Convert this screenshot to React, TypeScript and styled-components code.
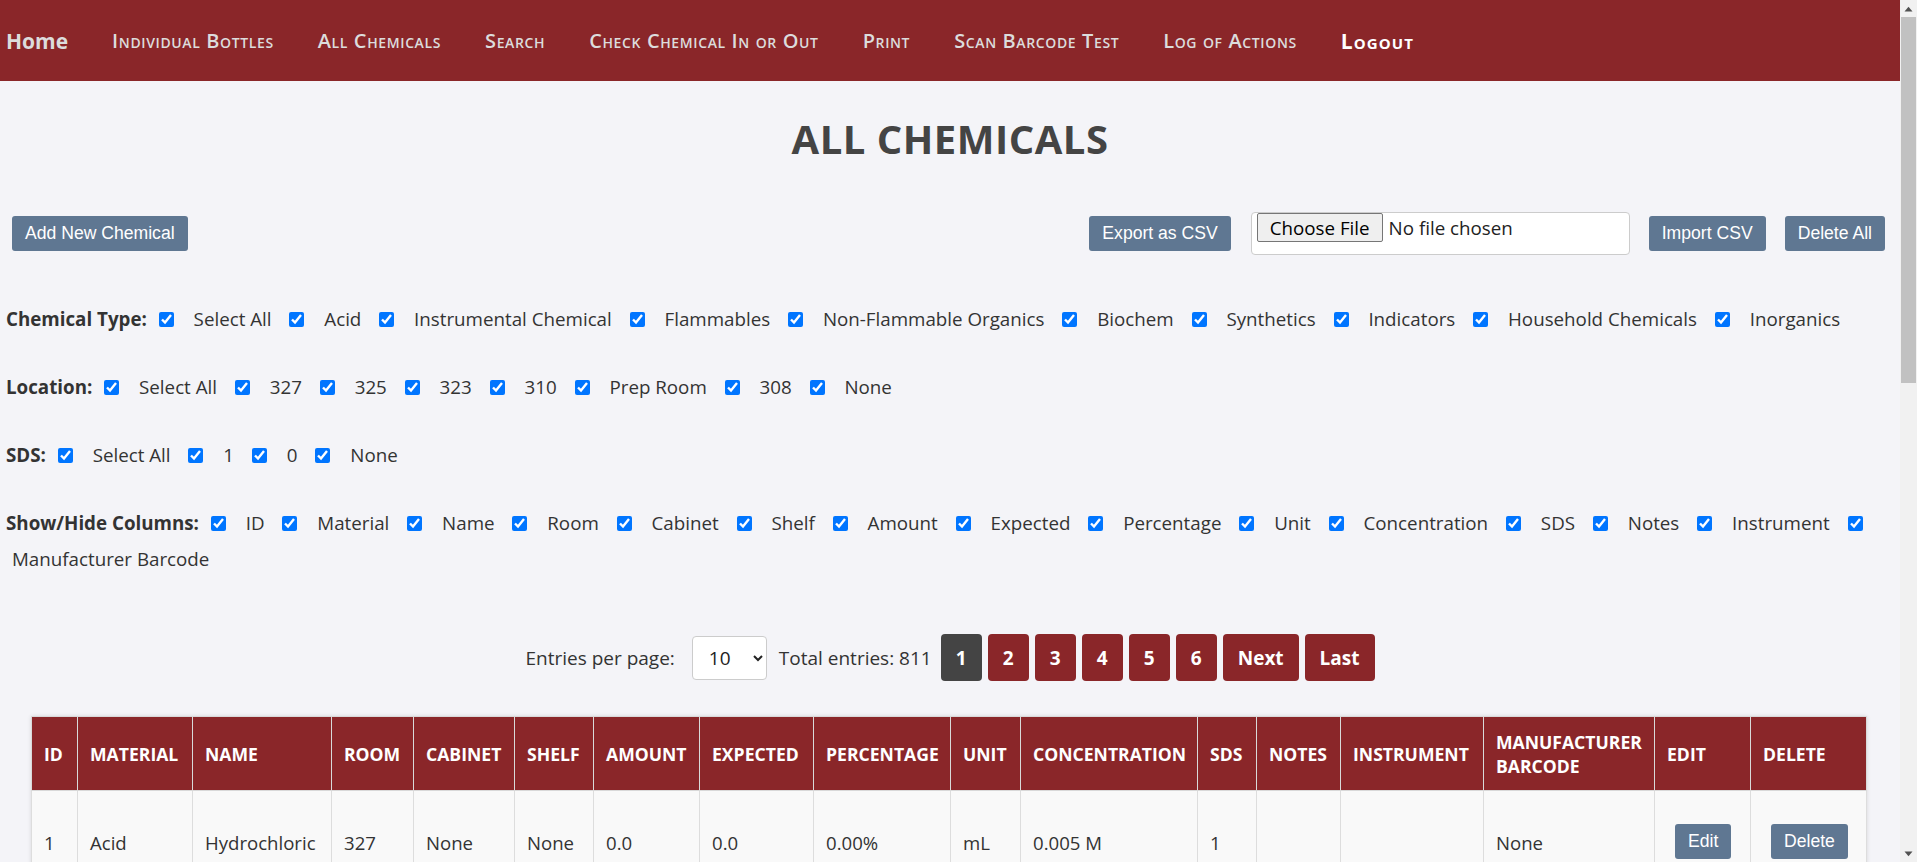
import React from "react";
import styled, { createGlobalStyle } from "styled-components";

const GlobalStyle = createGlobalStyle`
  html, body { margin: 0; padding: 0; }
  body {
    background: #f4f4f8;
    font-family: "Open Sans", "Noto Sans", sans-serif;
    color: #333;
    overflow: hidden;
  }
`;

const RED = "#8a2629";
const SLATE = "#5f7792";

const Shell = styled.div`
  display: flex;
  height: 100vh;
  overflow: hidden;
`;

const Page = styled.main`
  flex: 1;
  min-width: 0;
  overflow: hidden;
`;

const ScrollTrack = styled.div`
  width: 17px;
  flex: none;
  background: #f1f1f1;
  display: flex;
  flex-direction: column;
`;

const ScrollArrow = styled.div`
  height: 17px;
  display: flex;
  align-items: center;
  justify-content: center;
`;

const ScrollThumb = styled.div`
  height: 366px;
  margin: 0 1px;
  background: #c1c1c1;
`;

const ScrollRest = styled.div`
  flex: 1;
`;

const NavBar = styled.nav`
  height: 81px;
  background: ${RED};
  display: flex;
  align-items: center;
  gap: 44px;
  padding-left: 6px;
`;

const NavLink = styled.a<{ $home?: boolean; $strong?: boolean }>`
  color: ${(p) => (p.$strong ? "#ffffff" : "#dcdcdc")};
  text-decoration: none;
  font-family: "Open Sans", sans-serif;
  font-variant: ${(p) => (p.$home ? "normal" : "small-caps")};
  font-size: ${(p) => (p.$home ? "21px" : p.$strong ? "21px" : "20px")};
  letter-spacing: ${(p) => (p.$home ? "0" : p.$strong ? "1.1px" : "0.62px")};
  font-weight: ${(p) => (p.$home || p.$strong ? 700 : 600)};
  white-space: nowrap;
`;

const Title = styled.h1`
  margin: 31px 0 0;
  height: 54px;
  line-height: 54px;
  text-align: center;
  font-size: 40px;
  font-weight: 700;
  color: #444;
  letter-spacing: 0.5px;
`;

const ActionBar = styled.div`
  margin-top: 46px;
  height: 43px;
  display: flex;
  align-items: center;
  padding: 0 15px 0 12px;
`;

const Spacer = styled.div`
  flex: 1;
`;

const SlateButton = styled.button<{ $gapLeft?: number }>`
  height: 35px;
  padding: 0 13px;
  margin-left: ${(p) => p.$gapLeft ?? 0}px;
  background: ${SLATE};
  color: #fff;
  border: none;
  border-radius: 3px;
  font-family: "Liberation Sans", Arial, sans-serif;
  font-size: 17.6px;
  white-space: nowrap;
  cursor: pointer;
`;

const FileInput = styled.input`
  box-sizing: border-box;
  width: 379px;
  height: 43px;
  margin-left: 20px;
  padding: 0 5px;
  background: #fff;
  border: 1px solid #ccc;
  border-radius: 4px;
  font-family: "Open Sans", sans-serif;
  font-size: 18.75px;
  color: #222;

  &::file-selector-button {
    height: 29px;
    margin-right: 6px;
    padding: 0 12px;
    background: #efefef;
    border: 1px solid #767676;
    border-radius: 2px;
    font-family: "Open Sans", sans-serif;
    font-size: 18.75px;
    color: #000;
  }
`;

const Filters = styled.div`
  margin-top: 46px;
  padding: 0 6px;
  display: flex;
  flex-direction: column;
  gap: 32px;
`;

const FilterLine = styled.div`
  line-height: 36px;
  font-size: 18.75px;
  color: #333;
`;

const FilterTitle = styled.strong`
  font-weight: 700;
  color: #333;
`;

const Check = styled.input`
  width: 15px;
  height: 15px;
  margin: 0 9px 0 7px;
  vertical-align: -1px;
  accent-color: #0075ff;
`;

const OptLabel = styled.label`
  margin: 0 6px;
`;

const Pager = styled.div`
  margin-top: 57px;
  display: flex;
  align-items: center;
  justify-content: center;
  font-size: 19px;
  color: #333;
`;

const PagerText = styled.span<{ $mr: number }>`
  margin-right: ${(p) => p.$mr}px;
  white-space: nowrap;
`;

const PerPage = styled.select`
  width: 75px;
  height: 44px;
  margin-right: 12px;
  padding: 0 8px 0 12px;
  background: #fff;
  border: 1px solid #ccc;
  border-radius: 4px;
  font-family: "Open Sans", sans-serif;
  font-size: 19px;
  color: #222;
`;

const PageButtons = styled.div`
  display: flex;
  gap: 6px;
`;

const PageButton = styled.button<{ $active?: boolean }>`
  min-width: 41px;
  height: 47px;
  padding: 0 15px;
  background: ${(p) => (p.$active ? "#444444" : RED)};
  color: #fff;
  border: none;
  border-radius: 4px;
  font-family: "Open Sans", sans-serif;
  font-size: 19px;
  font-weight: 700;
  cursor: pointer;
`;

const TableWrap = styled.div`
  margin: 35px 0 0 31px;
`;

const Table = styled.table`
  width: 1835px;
  table-layout: fixed;
  border-collapse: collapse;
  box-shadow: 0 0 4px rgba(0, 0, 0, 0.12);
  font-size: 18.6px;
`;

const Th = styled.th<{ $w: number }>`
  width: ${(p) => p.$w}px;
  box-sizing: border-box;
  height: 74px;
  padding: 12px;
  background: ${RED};
  color: #fff;
  font-size: 17.6px;
  font-weight: 700;
  text-transform: uppercase;
  text-align: left;
  line-height: 24px;
  border: 1px solid #d9d9d9;
`;

const Td = styled.td`
  height: 104px;
  box-sizing: border-box;
  padding: 12px;
  background: #f9f9f9;
  color: #333;
  border: 1px solid #dddddd;
  vertical-align: middle;
  white-space: nowrap;
  overflow: hidden;
`;

const RowButton = styled(SlateButton)`
  margin-left: 8px;
  margin-top: -4px;
`;

const navItems = [
  "Individual Bottles",
  "All Chemicals",
  "Search",
  "Check Chemical In or Out",
  "Print",
  "Scan Barcode Test",
  "Log of Actions",
];

const filterGroups: { title: string; options: string[] }[] = [
  {
    title: "Chemical Type:",
    options: [
      "Select All",
      "Acid",
      "Instrumental Chemical",
      "Flammables",
      "Non-Flammable Organics",
      "Biochem",
      "Synthetics",
      "Indicators",
      "Household Chemicals",
      "Inorganics",
    ],
  },
  {
    title: "Location:",
    options: ["Select All", "327", "325", "323", "310", "Prep Room", "308", "None"],
  },
  { title: "SDS:", options: ["Select All", "1", "0", "None"] },
  {
    title: "Show/Hide Columns:",
    options: [
      "ID",
      "Material",
      "Name",
      "Room",
      "Cabinet",
      "Shelf",
      "Amount",
      "Expected",
      "Percentage",
      "Unit",
      "Concentration",
      "SDS",
      "Notes",
      "Instrument",
      "Manufacturer Barcode",
    ],
  },
];

const columns: { label: string; w: number }[] = [
  { label: "ID", w: 46 },
  { label: "Material", w: 115 },
  { label: "Name", w: 139 },
  { label: "Room", w: 82 },
  { label: "Cabinet", w: 101 },
  { label: "Shelf", w: 79 },
  { label: "Amount", w: 106 },
  { label: "Expected", w: 114 },
  { label: "Percentage", w: 137 },
  { label: "Unit", w: 70 },
  { label: "Concentration", w: 177 },
  { label: "SDS", w: 59 },
  { label: "Notes", w: 84 },
  { label: "Instrument", w: 143 },
  { label: "Manufacturer Barcode", w: 171 },
  { label: "Edit", w: 96 },
  { label: "Delete", w: 116 },
];

const rows: string[][] = [
  ["1", "Acid", "Hydrochloric", "327", "None", "None", "0.0", "0.0", "0.00%", "mL", "0.005 M", "1", "", "", "None"],
];

function Arrow({ up }: { up?: boolean }) {
  return (
    <svg width="9" height="6" viewBox="0 0 9 6" aria-hidden="true">
      <path d={up ? "M0.5 5.5 L4.5 0.8 L8.5 5.5 Z" : "M0.5 0.5 L4.5 5.2 L8.5 0.5 Z"} fill="#505050" />
    </svg>
  );
}

export default function App() {
  return (
    <>
      <GlobalStyle />
      <Shell>
        <Page>
          <NavBar>
            <NavLink $home href="#">Home</NavLink>
            {navItems.map((n) => (
              <NavLink key={n} href="#">{n}</NavLink>
            ))}
            <NavLink $strong href="#">Logout</NavLink>
          </NavBar>

          <Title>ALL CHEMICALS</Title>

          <ActionBar>
            <SlateButton>Add New Chemical</SlateButton>
            <Spacer />
            <SlateButton>Export as CSV</SlateButton>
            <FileInput type="file" />
            <SlateButton $gapLeft={19}>Import CSV</SlateButton>
            <SlateButton $gapLeft={19}>Delete All</SlateButton>
          </ActionBar>

          <Filters>
            {filterGroups.map((g) => (
              <FilterLine key={g.title}>
                <FilterTitle>{g.title}</FilterTitle>{" "}
                {g.options.map((o) => (
                  <React.Fragment key={o}>
                    <Check type="checkbox" defaultChecked />{" "}
                    <OptLabel>{o}</OptLabel>{" "}
                  </React.Fragment>
                ))}
              </FilterLine>
            ))}
          </Filters>

          <Pager>
            <PagerText $mr={17}>Entries per page:</PagerText>
            <PerPage defaultValue="10">
              <option value="10">10</option>
              <option value="25">25</option>
              <option value="50">50</option>
              <option value="100">100</option>
            </PerPage>
            <PagerText $mr={9}>Total entries: 811</PagerText>
            <PageButtons>
              {["1", "2", "3", "4", "5", "6", "Next", "Last"].map((p) => (
                <PageButton key={p} $active={p === "1"}>{p}</PageButton>
              ))}
            </PageButtons>
          </Pager>

          <TableWrap>
            <Table>
              <thead>
                <tr>
                  {columns.map((c) => (
                    <Th key={c.label} $w={c.w}>{c.label}</Th>
                  ))}
                </tr>
              </thead>
              <tbody>
                {rows.map((r) => (
                  <tr key={r[0]}>
                    {r.map((v, i) => (
                      <Td key={i}>{v}</Td>
                    ))}
                    <Td><RowButton>Edit</RowButton></Td>
                    <Td><RowButton>Delete</RowButton></Td>
                  </tr>
                ))}
              </tbody>
            </Table>
          </TableWrap>
        </Page>
        <ScrollTrack>
          <ScrollArrow><Arrow up /></ScrollArrow>
          <ScrollThumb />
          <ScrollRest />
          <ScrollArrow><Arrow /></ScrollArrow>
        </ScrollTrack>
      </Shell>
    </>
  );
}
